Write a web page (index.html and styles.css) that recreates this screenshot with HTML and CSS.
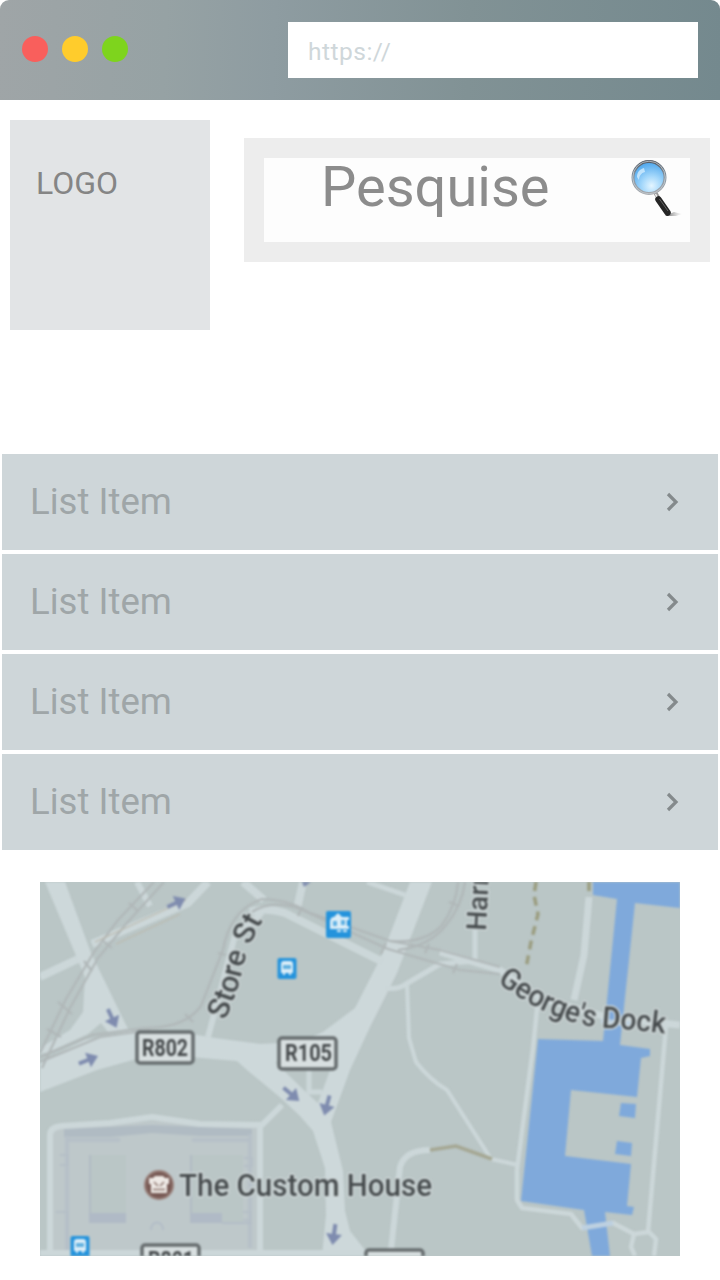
FILE: index.html
```html
<!DOCTYPE html>
<html lang="pt">
<head>
<meta charset="utf-8">
<title>Pesquise</title>
<link rel="stylesheet" href="styles.css">
</head>
<body>
<header class="browser-bar">
  <div class="dots"><i class="dot red"></i><i class="dot yellow"></i><i class="dot green"></i></div>
  <div class="address">https://</div>
</header>
<section class="top">
  <div class="logo">LOGO</div>
  <div class="search">
    <span class="search-text">Pesquise</span>
    <svg class="lens" viewBox="0 0 54 60" width="54" height="60">
      <defs>
        <radialGradient id="glass" cx=".58" cy=".76" r=".75"><stop offset="0" stop-color="#e4f5ff"/><stop offset=".4" stop-color="#a5d8fb"/><stop offset="1" stop-color="#4ba5ec"/></radialGradient>
        <linearGradient id="rim" x2="0" y2="1"><stop offset="0" stop-color="#555c66"/><stop offset=".5" stop-color="#8998a5"/><stop offset="1" stop-color="#a5a8ad"/></linearGradient>
        <linearGradient id="shade"><stop offset="0" stop-color="#555"/><stop offset="1" stop-color="#ddd" stop-opacity=".2"/></linearGradient>
      </defs>
      <path d="M36 57l9-4 8 2-6 2z" fill="url(#shade)"/>
      <path d="M26.500 34l4 7" stroke="#999" stroke-width="4"/><path d="M26.500 35l3 6" stroke="#eee" stroke-width="1.500"/>
      <circle cx="20" cy="18.500" r="16" fill="url(#glass)" stroke="url(#rim)" stroke-width="3"/>
      <circle cx="20" cy="18.500" r="16.300" fill="none" stroke="#c5cdd2" stroke-width=".8"/>
      <path d="M8 18c0-5 3-8 7-9l1 4c-4 1-6 4-6 8z" fill="#d9f0ff" opacity=".75"/>
      <path d="M29.500 40.500l9 13" stroke="#252525" stroke-width="6.500" stroke-linecap="round"/><path d="M30.500 40l8.500 12" stroke="#666" stroke-width="1"/>
    </svg>
  </div>
</section>
<ul class="list">
  <li class="item"><span>List Item</span><svg class="chevron" viewBox="0 0 13 20" width="13" height="20"><path d="M2 2l8 8-8 8"/></svg></li>
  <li class="item"><span>List Item</span><svg class="chevron" viewBox="0 0 13 20" width="13" height="20"><path d="M2 2l8 8-8 8"/></svg></li>
  <li class="item"><span>List Item</span><svg class="chevron" viewBox="0 0 13 20" width="13" height="20"><path d="M2 2l8 8-8 8"/></svg></li>
  <li class="item"><span>List Item</span><svg class="chevron" viewBox="0 0 13 20" width="13" height="20"><path d="M2 2l8 8-8 8"/></svg></li>
</ul>
<div class="map">
<svg class="map-art" viewBox="40 882 640 374" width="640" height="374">
  <defs>
    <path id="dock" d="M497 982Q546 1019 594 1027Q630 1029 676 1035"/>
    <path id="store" d="M225 1021Q239 988 243 967Q248 944 266 915"/>
    <path id="arrow" d="M-10-2H0V-8L11 0L0 8V2H-10Z"/>
  </defs>
  <!-- building footprint -->
  <g>
    <path d="M52 1128L152 1121L260 1126V1250H52Z" fill="#bec8ca"/>
    <path d="M64 1129L152 1125L252 1129V1136H200L152 1133L110 1137H64Z" fill="#b0bbc3"/>
    <path d="M67 1136V1250M67 1140H120M192 1140H250M250 1134V1248" fill="none" stroke="#b6c0c8" stroke-width="4"/>
    <path d="M60 1155h8v10h-8M244 1158h8v8h-8M243 1212h8v8h-8M56 1212h12v36" fill="none" stroke="#b5bfc7" stroke-width="2"/>
    <path d="M89 1155h37v68H89zM191 1155h52v68H191z" fill="#bac6c6"/>
    <path d="M90 1155v68M191 1155v68" stroke="#b1bbc4" stroke-width="2"/>
    <path d="M89 1213h37v10H89zM191 1213h31v10H191z" fill="#b0bac6"/>
    <path d="M222 1223h30M151 1230c0-10 12-10 12 0" fill="none" stroke="#b3bdc7" stroke-width="2"/>
  </g>
  <!-- roads -->
  <g fill="#cdd8da">
    <path d="M45 882H65L91 953L128 1029L108 1032L101 1023L88 1034L49 1052L40 1054V1048L70 1030L83 1012L85 977L77 958Z"/>
    <path d="M40 1062L85 1040L130 1031L180 1032L215 1038L260 1044L300 1042L323 1032L355 1008L378 963L384 950L410 882H432L397 973L370 1027L350 1070L331 1122L343 1171L345 1211L350 1231L365 1250V1256H322L326 1215L325 1168L313 1131L300 1116L282 1099L247 1070L237 1061L190 1057L140 1058L97 1070L40 1092Z"/>
  </g>
  <path d="M275 1062H333L318 1103L308 1094Z" fill="#bac6c6"/>
  <g fill="none" stroke="#ccd7d9" stroke-width="6" stroke-linejoin="round">
    <path d="M40 977L78 959M92 944L188 903L208 882" stroke-width="8"/>
    <path d="M137 882L150 906M208 1037L218 1000L235 935L262 913"/>
    <path d="M243 882L264 900M303 882L297 909M250 912Q265 907 285 913L383 962" stroke-width="8"/>
    <path d="M367 882L405 895M385 988Q398 990 406 984L440 964L475 961" stroke-width="5"/>
    <path d="M407 984L409 1038L416 1062Q430 1080 447 1090L491 1159L518 1165" stroke-width="4"/>
    <path d="M309 1066V1092H322M475 960V925" stroke-width="5"/>
    <path d="M589 897L584 955L574 1000M440 952L500 970L540 998L610 1018L680 1025" stroke-width="7"/>
    <path d="M538 1000L533 1048L517 1170V1200L522 1208L571 1214L582 1228L613 1223L634 1234L649 1232L656 1239L654 1256M634 1234L631 1247L635 1256M666 1026L648 1232" stroke-width="4.500"/>
    <path d="M50 1250V1135Q50 1127 62 1126L110 1123L152 1117L200 1124L262 1125L282 1105M260 1125V1250M391 1250L400 1167Q405 1150 430 1150M40 1253H365"/>
  </g>
  <!-- railway -->
  <g fill="none" stroke="#b0b7b8" stroke-width="2.200">
    <path d="M154 882L118 920L94 952L66 999L40 1053M164 882L126 924L98 958L70 1008L42 1068"/>
    <path d="M40 1057L92 1035L145 1028Q185 1028 201 1006L223 950Q230 910 262 899Q290 900 308 912L390 941Q425 944 442 925Q456 906 458 882"/>
    <path d="M40 1062L100 1037L150 1030M252 912Q272 899 300 909L388 949L460 970L500 974M398 950Q430 946 446 925Q462 906 465 882M390 941L440 950L500 967"/>
    <path d="M129 903l9 8M103 941l9 7M84 961l8 10M58 1002l14 12M47 1029l14 8M218 953l8 2M185 1014l8 8M302 907l-4 9M386 943l-5 11M429 944l-4 9M449 902l10 4M457 964l-4 9"/>
  </g>
  <path d="M95 942L186 900M116 944L180 914" stroke="#bbb9ad" stroke-width="1.200"/>
  <!-- water -->
  <g fill="#7fa9db">
    <path d="M593 882H680V908L635 903L620 1045L650 1049V1056L641 1058L637 1097L571 1090L565 1156L631 1164L627 1206L634 1207L632 1215L605 1212L610 1256H592L584 1210L521 1201L538 1039L603 1041L617 899L593 895Z"/>
    <path d="M621 1103l15 1-1 14-16-2zM617 1141l15 2-1 13-16-2z"/>
  </g>
  <path d="M582 1228L613 1223M601 1021L632 1024" stroke="#bdd0e0" stroke-width="5"/>
  <path d="M536 882L534 895L538 914L531 942L526 968M589 882V897" fill="none" stroke="#9b9d80" stroke-width="3.500" stroke-dasharray="9 6"/>
  <path d="M430 1150L456 1146L492 1159" fill="none" stroke="#a5a793" stroke-width="3.500"/>
  <g fill="#7f8caf">
    <use href="#arrow" transform="translate(176 903) rotate(-25) scale(.95)"/>
    <use href="#arrow" transform="translate(112 1018) rotate(65) scale(.98)"/>
    <use href="#arrow" transform="translate(88 1060) rotate(-22) scale(.98)"/>
    <use href="#arrow" transform="translate(291 1094) rotate(40) scale(.98)"/>
    <use href="#arrow" transform="translate(327 1105) rotate(105) scale(.98)"/>
    <use href="#arrow" transform="translate(334 1234) rotate(98) scale(1)"/>
    <path d="M302 882h9l-7 5z"/>
  </g>
  <!-- transit markers -->
  <rect x="326" y="911" width="25" height="27" rx="2" fill="#2493dc"/>
  <path d="M330 922q0-5 4-5l4-4 4 4h7v3h-2v6h2v3h-19z" fill="#dceef8"/>
  <path d="M333 921h4v5h-4zM341 920h4v5h-4z" fill="#5fb0e2"/><path d="M337 931h4M343 931h4" stroke="#dceef8" stroke-width="2"/>
  <g id="bus"><rect x="277.500" y="958" width="19" height="21" rx="2" fill="#2493dc"/><path d="M281 964q0-3 3-3h6q3 0 3 3v9h-2v2h-2v-2h-4v2h-2v-2h-2z" fill="#dceef8"/><path d="M283 965h8v4h-8z" fill="#62b1df"/></g>
  <use href="#bus" x="-207" y="278"/>
  <!-- road numbers -->
  <g class="plate">
    <rect x="137" y="1032" width="56" height="31" rx="3"/><rect x="279" y="1038" width="57" height="31" rx="3"/>
    <rect x="142" y="1245" width="57" height="31" rx="3"/><rect x="366" y="1250" width="57" height="31" rx="3"/>
  </g>
  <g class="plate-text">
    <text x="142" y="1056" textLength="46" lengthAdjust="spacingAndGlyphs">R802</text>
    <text x="285" y="1061" textLength="47" lengthAdjust="spacingAndGlyphs">R105</text>
    <text x="148" y="1268" textLength="46" lengthAdjust="spacingAndGlyphs">R801</text>
  </g>
  <circle cx="159" cy="1185" r="14" fill="#785a55" stroke="#987f79" stroke-width="2"/>
  <path d="M149 1178h4l2-2h8l2 2h4v6h-2v9h-16v-9h-2z" fill="#eee9e5"/><path d="M154 1182l4 4M164 1182l-4 4M153 1189.500h12" fill="none" stroke="#8c736d" stroke-width="1.500"/>
  <g class="label">
    <text x="179" y="1196" textLength="253" lengthAdjust="spacingAndGlyphs" font-size="31">The Custom House</text>
    <text font-size="30"><textPath href="#dock" textLength="179" lengthAdjust="spacingAndGlyphs">George's Dock</textPath></text>
    <text font-size="30"><textPath href="#store" textLength="108" lengthAdjust="spacingAndGlyphs">Store St</textPath></text>
    <text font-size="28" transform="translate(486 931) rotate(-87)">Harr</text>
  </g>
</svg>
</div>
</body>
</html>
```
FILE: styles.css
```css
* { box-sizing: border-box; }
body {
  margin: 0;
  width: 720px;
  height: 1280px;
  overflow: hidden;
  background: #fff;
  font-family: Roboto, "Liberation Sans", sans-serif;
}
.browser-bar {
  display: flex;
  justify-content: space-between;
  height: 100px;
  padding: 22px 22px;
  border-radius: 9px 9px 0 0;
  background: linear-gradient(92deg, #9fa5a7 0%, #96a2a4 23%, #8e9ca1 38%, #819295 65%, #74898e 100%);
}
.dots { display: flex; gap: 14px; padding-top: 14px; }
.dot { width: 26px; height: 26px; border-radius: 50%; }
.red { background: #f95f5c; }
.yellow { background: #ffcc2c; }
.green { background: #7ed41d; }
.address {
  width: 410px;
  height: 56px;
  padding: 2px 20px 0;
  background: #fff;
  color: #cfd7da;
  font-size: 24.5px;
  line-height: 56px;
  letter-spacing: .5px;
}
.top {
  display: flex;
  justify-content: space-between;
  align-items: flex-start;
  height: 354px;
  padding: 20px 10px 0;
}
.logo {
  width: 200px;
  height: 210px;
  padding: 44px 26px;
  background: #e2e4e6;
  color: #858585;
  font-size: 32px;
  line-height: 38px;
}
.search {
  display: flex;
  justify-content: space-between;
  width: 466px;
  height: 124px;
  margin-top: 18px;
  padding: 0 7px 0 57px;
  border: 20px solid #ededed;
  background: #fdfdfd;
}
.search-text {
  color: #8c8c8c;
  font-size: 56px;
  line-height: 58px;
}
.lens { display: block; margin-top: 1px; }
.list {
  display: flex;
  flex-direction: column;
  gap: 4px;
  margin: 0;
  padding: 0 2px;
  list-style: none;
}
.item {
  display: flex;
  justify-content: space-between;
  align-items: center;
  height: 96px;
  padding: 0 39px 0 28px;
  background: #ced6d9;
  color: #9fa6a8;
  font-size: 36.600px;
}
.item span { padding-bottom: 2px; }
.chevron { fill: none; stroke: #848a8c; stroke-width: 3.200; }
.map {
  width: 640px;
  height: 374px;
  margin: 32px 40px 0;
  overflow: hidden;
  background: #bac6c6;
}
.map-art { display: block; filter: blur(.8px); }
.plate { fill: #d8dfe0; stroke: #666c6e; stroke-width: 3.500; }
.plate-text { fill: #45494b; font-size: 24px; font-weight: 700; }
.label {
  fill: #464b4d;
  font-weight: 500;
  paint-order: stroke;
  stroke: #ced6d7;
  stroke-width: 3px;
  stroke-linejoin: round;
}
```
